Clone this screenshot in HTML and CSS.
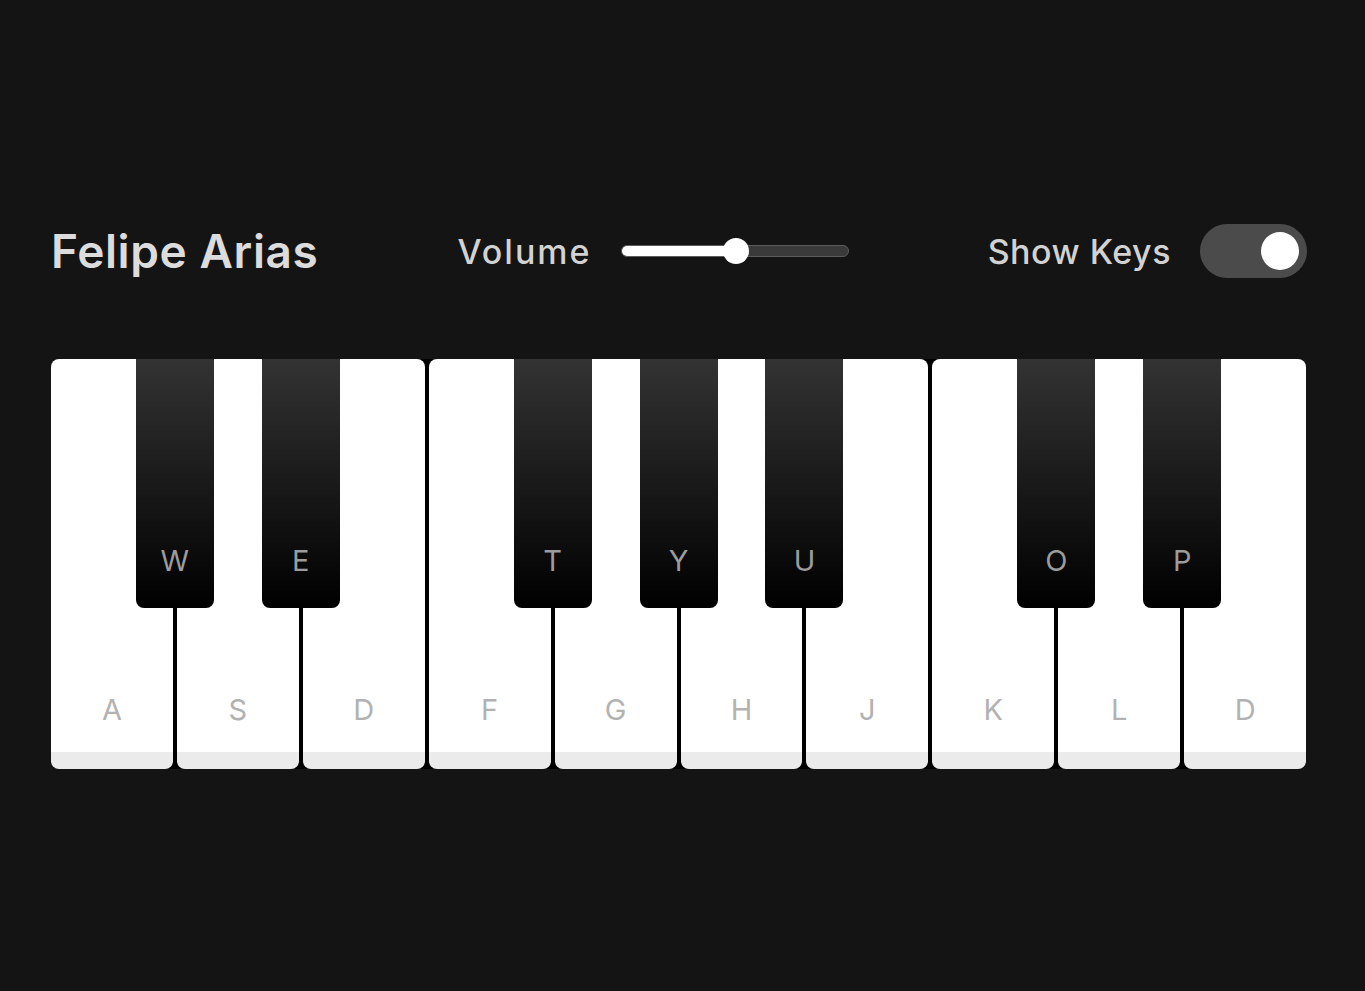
FILE: index.html
```html
<!DOCTYPE html>
<html lang="en">
<head>
    <meta charset="UTF-8">
    <meta name="viewport" content="width=device-width, initial-scale=1.0">
    <title>Felipe Arias Piano</title>
    <link rel="stylesheet" href="styles.css">
</head>
<body>
    <div class="wrapper">
        <header class="header">
            <h2 class="title">Felipe Arias</h2>
            <div class="column volume">
                <span>Volume</span>
                <div class="slider">
                    <div class="slider-fill"></div>
                    <div class="slider-thumb"></div>
                </div>
            </div>
            <div class="column keys-check">
                <span>Show Keys</span>
                <div class="toggle"><div class="toggle-knob"></div></div>
            </div>
        </header>

        <ul class="piano-keys">
            <li class="key white">
                <span>A</span>
                <div class="key black"><span>W</span></div>
            </li>
            <li class="key white">
                <span>S</span>
                <div class="key black"><span>E</span></div>
            </li>
            <li class="key white"><span>D</span></li>
            <li class="key white">
                <span>F</span>
                <div class="key black"><span>T</span></div>
            </li>
            <li class="key white">
                <span>G</span>
                <div class="key black"><span>Y</span></div>
            </li>
            <li class="key white">
                <span>H</span>
                <div class="key black"><span>U</span></div>
            </li>
            <li class="key white"><span>J</span></li>
            <li class="key white">
                <span>K</span>
                <div class="key black"><span>O</span></div>
            </li>
            <li class="key white">
                <span>L</span>
                <div class="key black"><span>P</span></div>
            </li>
            <li class="key white"><span>D</span></li>
        </ul>
    </div>
</body>
</html>
```

FILE: styles.css
```css
* {
    margin: 0;
    padding: 0;
    box-sizing: border-box;
}
body {
    font-family: "Inter", "Liberation Sans", sans-serif;
    background: #141414;
    color: #d6d6d6;
}
.wrapper {
    width: 1256px;
    margin-left: 51px;
    padding-top: 224px;
}
.header {
    display: flex;
    align-items: center;
    justify-content: space-between;
    height: 54px;
}
.title {
    font-size: 46px;
    font-weight: 600;
    color: #dcdcdc;
    letter-spacing: 0.6px;
}
.column {
    display: flex;
    align-items: center;
    gap: 29px;
    font-size: 34px;
    font-weight: 500;
    color: #d2d2d2;
}
.volume span {
    letter-spacing: 2px;
}
.keys-check span {
    letter-spacing: 0.5px;
}
.slider {
    position: relative;
    width: 228px;
    height: 12px;
    border-radius: 6px;
    background: #3a3a3a;
    border: 1px solid #5c5c5c;
}
.slider-fill {
    width: 114px;
    height: 100%;
    border-radius: 6px 0 0 6px;
    background: #fff;
}
.slider-thumb {
    position: absolute;
    left: 101px;
    top: -8px;
    width: 26px;
    height: 26px;
    border-radius: 50%;
    background: #fff;
}
.toggle {
    width: 107px;
    height: 54px;
    border-radius: 27px;
    background: #4b4b4b;
    display: flex;
    align-items: center;
    justify-content: flex-end;
    padding-right: 8px;
}
.toggle-knob {
    width: 38px;
    height: 38px;
    border-radius: 50%;
    background: #fff;
}
.piano-keys {
    list-style: none;
    display: flex;
    gap: 4px;
    width: 1255px;
    margin-top: 81px;
    background: #000;
    border-radius: 8px;
}
.key.white {
    position: relative;
    flex: 1;
    height: 410px;
    background: #fff;
    border-bottom: 17px solid #ebebeb;
    border-radius: 8px;
    display: flex;
    align-items: flex-end;
    justify-content: center;
    padding-bottom: 27px;
}
.key span {
    font-size: 29px;
    line-height: 30px;
    color: #b2b2b2;
}
.key.black {
    position: absolute;
    top: 0;
    right: -41px;
    z-index: 2;
    width: 78px;
    height: 249px;
    border-radius: 0 0 8px 8px;
    background: linear-gradient(#333, #000);
    display: flex;
    align-items: flex-end;
    justify-content: center;
    padding-bottom: 32px;
}
.key.black span {
    color: #9c9c9c;
}
```
